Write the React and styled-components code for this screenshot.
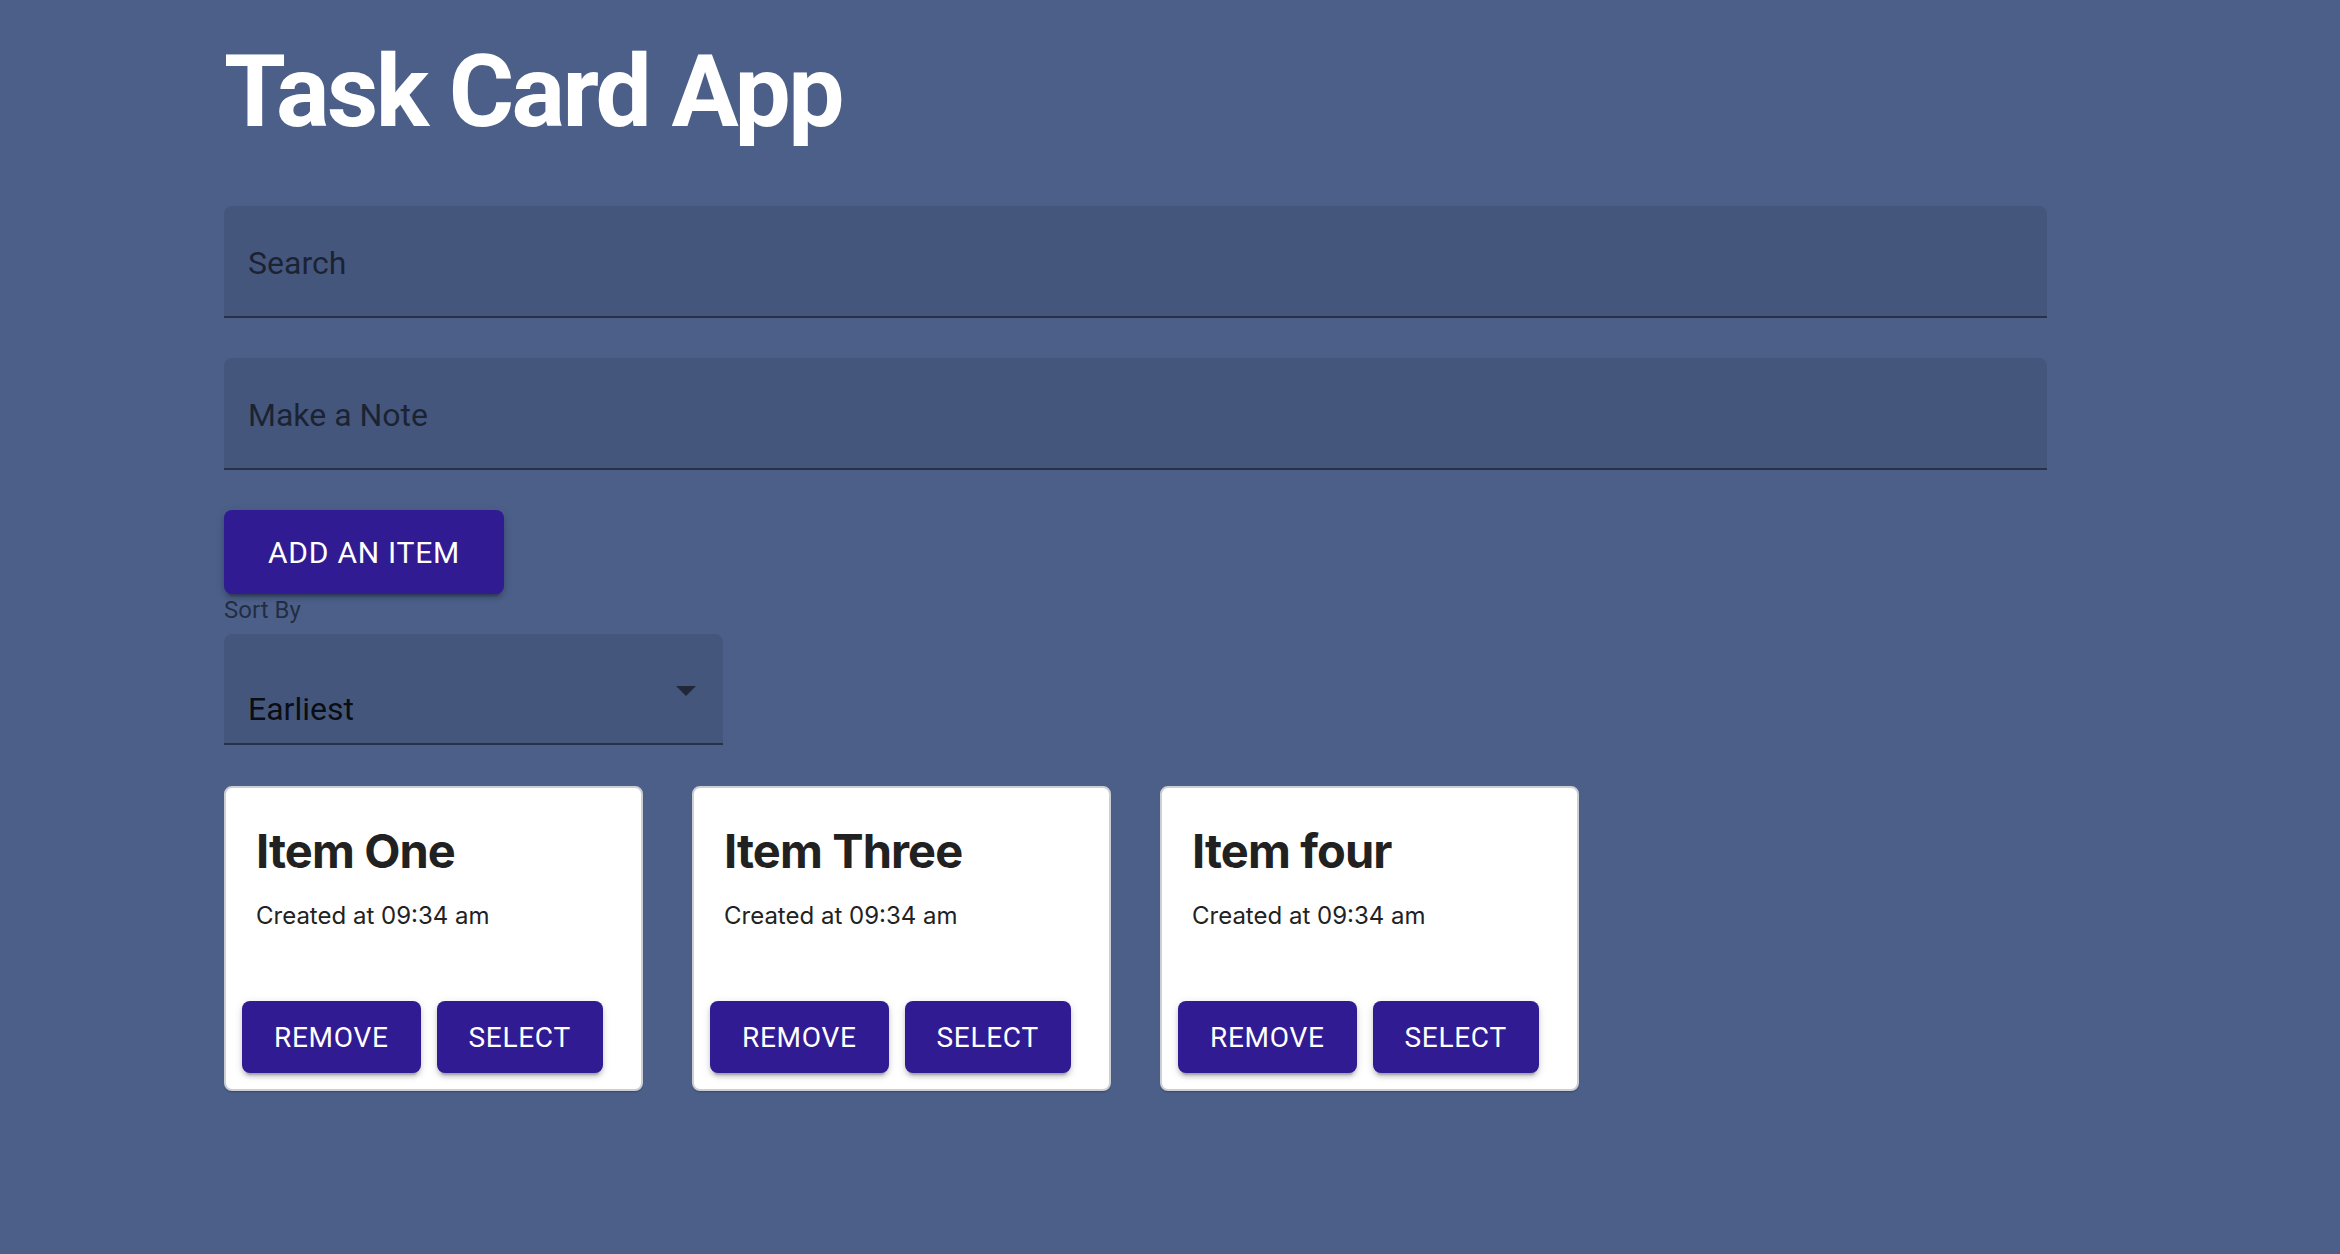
import React, { useState } from "react";
import styled, { createGlobalStyle } from "styled-components";

const GlobalStyle = createGlobalStyle`
  html, body {
    margin: 0;
    padding: 0;
    background: #4b5f89;
  }
  * {
    box-sizing: border-box;
  }
`;

const initialItems = [
  { id: 1, name: "Item One", time: "09:34 am" },
  { id: 3, name: "Item Three", time: "09:34 am" },
  { id: 4, name: "Item four", time: "09:34 am" },
];

export default function App() {
  const [items, setItems] = useState(initialItems);
  const [note, setNote] = useState("");
  const [search, setSearch] = useState("");

  const removeItem = (id) => setItems(items.filter((it) => it.id !== id));

  return (
    <Page>
      <GlobalStyle />
      <Heading>Task Card App</Heading>

      <Field
        placeholder="Search"
        value={search}
        onChange={(e) => setSearch(e.target.value)}
      />
      <Field
        $gap
        placeholder="Make a Note"
        value={note}
        onChange={(e) => setNote(e.target.value)}
      />

      <Button $size="large">Add an item</Button>

      <SortLabel>Sort By</SortLabel>
      <SelectBox>
        <SelectValue>Earliest</SelectValue>
        <Arrow viewBox="0 0 24 24">
          <path d="M7 10l5 5 5-5z" />
        </Arrow>
      </SelectBox>

      <CardRow>
        {items
          .filter((it) => it.name.toLowerCase().includes(search.toLowerCase()))
          .map((it) => (
            <Card key={it.id}>
              <CardBody>
                <CardTitle>{it.name}</CardTitle>
                <CardMeta>Created at {it.time}</CardMeta>
              </CardBody>
              <CardActions>
                <Button $size="medium" onClick={() => removeItem(it.id)}>
                  Remove
                </Button>
                <Button $size="medium">Select</Button>
              </CardActions>
            </Card>
          ))}
      </CardRow>
    </Page>
  );
}

const Page = styled.div`
  display: flex;
  flex-direction: column;
  align-items: flex-start;
  padding: 42px 0 0 224px;
  min-height: 100vh;
`;

const Heading = styled.h1`
  margin: 0 0 64px;
  font-family: Roboto, "Liberation Sans", sans-serif;
  font-weight: 700;
  font-size: 100px;
  line-height: 1;
  letter-spacing: -2.6px;
  color: #ffffff;
`;

const Field = styled.input`
  display: block;
  width: 1823px;
  height: 112px;
  margin-top: ${(p) => (p.$gap ? "40px" : "0")};
  padding: 4px 24px 0;
  border: none;
  border-bottom: 2px solid rgba(0, 0, 0, 0.42);
  border-radius: 8px 8px 0 0;
  background: rgba(0, 0, 0, 0.09);
  font-family: Roboto, "Liberation Sans", sans-serif;
  font-size: 32px;
  color: rgba(0, 0, 0, 0.87);
  outline: none;

  &::placeholder {
    color: rgba(0, 0, 0, 0.6);
  }
`;

const Button = styled.button`
  display: inline-flex;
  align-items: center;
  justify-content: center;
  height: ${(p) => (p.$size === "large" ? "84px" : "72px")};
  margin-top: ${(p) => (p.$size === "large" ? "40px" : "0")};
  padding: ${(p) => (p.$size === "large" ? "0 44px" : "0 32px")};
  border: none;
  border-radius: 8px;
  background: #311b92;
  color: #ffffff;
  font-family: Roboto, "Liberation Sans", sans-serif;
  font-weight: 400;
  font-size: ${(p) => (p.$size === "large" ? "30px" : "28px")};
  letter-spacing: 0.025em;
  text-transform: uppercase;
  box-shadow: 0 6px 2px -4px rgba(0, 0, 0, 0.2), 0 4px 4px 0 rgba(0, 0, 0, 0.14),
    0 2px 10px 0 rgba(0, 0, 0, 0.12);
  cursor: pointer;
`;

const SortLabel = styled.div`
  font-family: Roboto, "Liberation Sans", sans-serif;
  font-size: 24px;
  line-height: 32px;
  color: rgba(0, 0, 0, 0.54);
`;

const SelectBox = styled.div`
  display: flex;
  justify-content: space-between;
  align-items: flex-start;
  width: 499px;
  height: 111px;
  margin-top: 8px;
  padding: 0 13px 0 24px;
  border-bottom: 2px solid rgba(0, 0, 0, 0.42);
  border-radius: 8px 8px 0 0;
  background: rgba(0, 0, 0, 0.09);
  cursor: pointer;
`;

const SelectValue = styled.span`
  padding-top: 56px;
  font-family: Roboto, "Liberation Sans", sans-serif;
  font-size: 32px;
  color: rgba(0, 0, 0, 0.87);
`;

const Arrow = styled.svg`
  width: 48px;
  height: 48px;
  margin-top: 32px;
  fill: rgba(0, 0, 0, 0.54);
`;

const CardRow = styled.div`
  display: flex;
  gap: 49px;
  margin-top: 41px;
`;

const Card = styled.div`
  display: flex;
  flex-direction: column;
  width: 419px;
  height: 305px;
  border: 2px solid #cdcfd4;
  border-radius: 8px;
  background: #ffffff;
  box-shadow: 0 2px 2px -1px rgba(0, 0, 0, 0.25);
`;

const CardBody = styled.div`
  flex: 1;
  padding: 35px 30px 0;
`;

const CardTitle = styled.h2`
  margin: 0;
  font-family: Inter, "Liberation Sans", sans-serif;
  font-weight: 700;
  font-size: 47px;
  line-height: 1.2;
  letter-spacing: -0.9px;
  color: #212121;
`;

const CardMeta = styled.p`
  margin: 19px 0 0;
  font-family: Inter, "Liberation Sans", sans-serif;
  font-size: 24px;
  line-height: 36px;
  color: #222222;
`;

const CardActions = styled.div`
  display: flex;
  gap: 16px;
  padding: 0 16px 16px;
`;
